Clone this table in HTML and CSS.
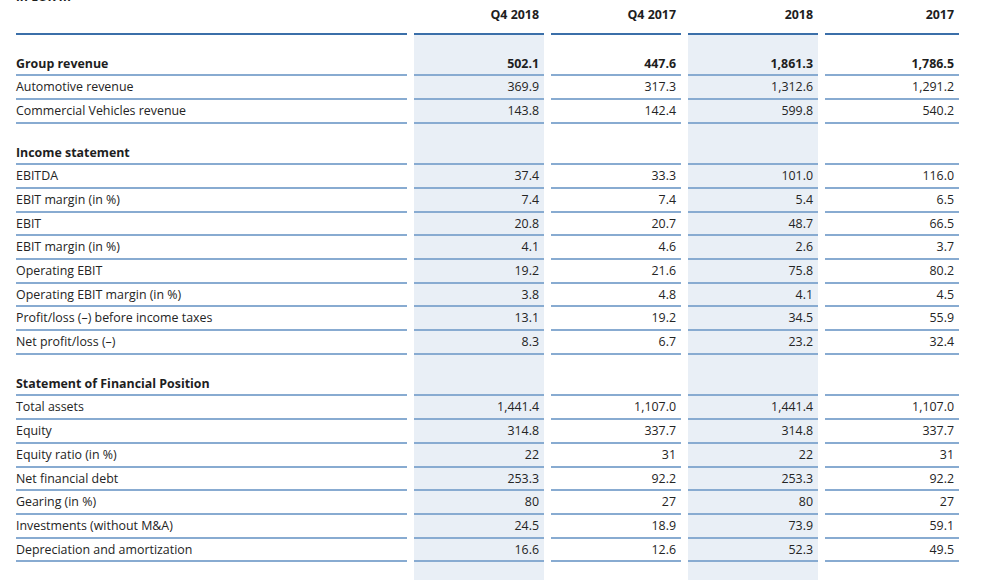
FILE: index.html
```html
<!DOCTYPE html>
<html lang="en">
<head>
<meta charset="utf-8">
<title>Key figures</title>
<link rel="stylesheet" href="styles.css">
</head>
<body>
<div class="sheet">
  <div class="caption">in EUR m</div>

  <div class="row head">
    <div class="cell label"></div>
    <div class="cell num">Q4 2018</div>
    <div class="cell num">Q4 2017</div>
    <div class="cell num">2018</div>
    <div class="cell num">2017</div>
  </div>

  <div class="row tall strong">
    <div class="cell label">Group revenue</div>
    <div class="cell num">502.1</div>
    <div class="cell num">447.6</div>
    <div class="cell num">1,861.3</div>
    <div class="cell num">1,786.5</div>
  </div>
  <div class="row">
    <div class="cell label">Automotive revenue</div>
    <div class="cell num">369.9</div>
    <div class="cell num">317.3</div>
    <div class="cell num">1,312.6</div>
    <div class="cell num">1,291.2</div>
  </div>
  <div class="row">
    <div class="cell label">Commercial Vehicles revenue</div>
    <div class="cell num">143.8</div>
    <div class="cell num">142.4</div>
    <div class="cell num">599.8</div>
    <div class="cell num">540.2</div>
  </div>

  <div class="row tall strong">
    <div class="cell label">Income statement</div>
    <div class="cell num"></div>
    <div class="cell num"></div>
    <div class="cell num"></div>
    <div class="cell num"></div>
  </div>
  <div class="row">
    <div class="cell label">EBITDA</div>
    <div class="cell num">37.4</div>
    <div class="cell num">33.3</div>
    <div class="cell num">101.0</div>
    <div class="cell num">116.0</div>
  </div>
  <div class="row">
    <div class="cell label">EBIT margin (in %)</div>
    <div class="cell num">7.4</div>
    <div class="cell num">7.4</div>
    <div class="cell num">5.4</div>
    <div class="cell num">6.5</div>
  </div>
  <div class="row">
    <div class="cell label">EBIT</div>
    <div class="cell num">20.8</div>
    <div class="cell num">20.7</div>
    <div class="cell num">48.7</div>
    <div class="cell num">66.5</div>
  </div>
  <div class="row">
    <div class="cell label">EBIT margin (in %)</div>
    <div class="cell num">4.1</div>
    <div class="cell num">4.6</div>
    <div class="cell num">2.6</div>
    <div class="cell num">3.7</div>
  </div>
  <div class="row">
    <div class="cell label">Operating EBIT</div>
    <div class="cell num">19.2</div>
    <div class="cell num">21.6</div>
    <div class="cell num">75.8</div>
    <div class="cell num">80.2</div>
  </div>
  <div class="row">
    <div class="cell label">Operating EBIT margin (in %)</div>
    <div class="cell num">3.8</div>
    <div class="cell num">4.8</div>
    <div class="cell num">4.1</div>
    <div class="cell num">4.5</div>
  </div>
  <div class="row">
    <div class="cell label">Profit/loss (–) before income taxes</div>
    <div class="cell num">13.1</div>
    <div class="cell num">19.2</div>
    <div class="cell num">34.5</div>
    <div class="cell num">55.9</div>
  </div>
  <div class="row">
    <div class="cell label">Net profit/loss (–)</div>
    <div class="cell num">8.3</div>
    <div class="cell num">6.7</div>
    <div class="cell num">23.2</div>
    <div class="cell num">32.4</div>
  </div>

  <div class="row tall strong">
    <div class="cell label">Statement of Financial Position</div>
    <div class="cell num"></div>
    <div class="cell num"></div>
    <div class="cell num"></div>
    <div class="cell num"></div>
  </div>
  <div class="row">
    <div class="cell label">Total assets</div>
    <div class="cell num">1,441.4</div>
    <div class="cell num">1,107.0</div>
    <div class="cell num">1,441.4</div>
    <div class="cell num">1,107.0</div>
  </div>
  <div class="row">
    <div class="cell label">Equity</div>
    <div class="cell num">314.8</div>
    <div class="cell num">337.7</div>
    <div class="cell num">314.8</div>
    <div class="cell num">337.7</div>
  </div>
  <div class="row">
    <div class="cell label">Equity ratio (in %)</div>
    <div class="cell num">22</div>
    <div class="cell num">31</div>
    <div class="cell num">22</div>
    <div class="cell num">31</div>
  </div>
  <div class="row">
    <div class="cell label">Net financial debt</div>
    <div class="cell num">253.3</div>
    <div class="cell num">92.2</div>
    <div class="cell num">253.3</div>
    <div class="cell num">92.2</div>
  </div>
  <div class="row">
    <div class="cell label">Gearing (in %)</div>
    <div class="cell num">80</div>
    <div class="cell num">27</div>
    <div class="cell num">80</div>
    <div class="cell num">27</div>
  </div>
  <div class="row">
    <div class="cell label">Investments (without M&amp;A)</div>
    <div class="cell num">24.5</div>
    <div class="cell num">18.9</div>
    <div class="cell num">73.9</div>
    <div class="cell num">59.1</div>
  </div>
  <div class="row">
    <div class="cell label">Depreciation and amortization</div>
    <div class="cell num">16.6</div>
    <div class="cell num">12.6</div>
    <div class="cell num">52.3</div>
    <div class="cell num">49.5</div>
  </div>

  <div class="row tail">
    <div class="cell label"></div>
    <div class="cell num"></div>
    <div class="cell num"></div>
    <div class="cell num"></div>
    <div class="cell num"></div>
  </div>
</div>
</body>
</html>
```

FILE: styles.css
```css
html, body {
  margin: 0;
  padding: 0;
  background: #ffffff;
  overflow: hidden;
}

.sheet {
  padding: 0 0 0 16px;
  font-family: "Open Sans", "Liberation Sans", sans-serif;
  font-size: 12.4px;
  color: #242424;
}

.caption {
  margin-top: -10px;
  height: 14px;
  line-height: 14px;
  font-weight: 700;
  color: #1e1e1e;
}

.row {
  display: grid;
  grid-template-columns: 391px 130px 130px 130px 134px;
  column-gap: 7px;
}

.cell {
  height: 21.7px;
  line-height: 21.7px;
  border-bottom: 2px solid #88abd1;
  white-space: nowrap;
}

.num {
  text-align: right;
  padding-right: 5px;
}

.row:not(.head) .cell:nth-child(2),
.row:not(.head) .cell:nth-child(4) {
  background: #e9eff6;
}

.head .cell {
  height: 28.5px;
  line-height: 22px;
  font-weight: 700;
  color: #1e1e1e;
  border-bottom-color: #3b6fa9;
}

.tall .cell {
  height: 21.7px;
  padding-top: 18px;
}

.strong .cell {
  font-weight: 700;
  color: #1e1e1e;
}

.tail .cell {
  height: 40px;
  border-bottom: none;
}
```
